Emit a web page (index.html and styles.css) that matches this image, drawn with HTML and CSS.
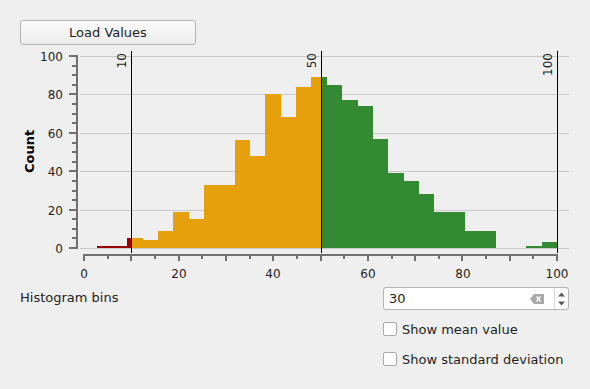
FILE: index.html
```html
<!DOCTYPE html>
<html>
<head>
<meta charset="utf-8">
<link rel="stylesheet" href="styles.css">
</head>
<body>
<div class="app">
  <div class="toolbar">
    <button class="btn">Load Values</button>
  </div>
  <svg class="chart" width="590" height="240" viewBox="0 44 590 240" xmlns="http://www.w3.org/2000/svg" shape-rendering="crispEdges">
    <!-- grid -->
    <g fill="#c9c9c9">
      <rect x="80" y="56" width="489" height="1"/>
      <rect x="80" y="94" width="489" height="1"/>
      <rect x="80" y="133" width="489" height="1"/>
      <rect x="80" y="171" width="489" height="1"/>
      <rect x="80" y="210" width="489" height="1"/>
      <rect x="80" y="248" width="489" height="1"/>
    </g>
    <!-- bars -->
    <g fill="#990000">
      <rect x="97" y="246" width="30" height="2"/>
      <rect x="127" y="238" width="4" height="10"/>
    </g>
    <g fill="#e6a00b">
      <rect x="131" y="238" width="12" height="10"/>
      <rect x="143" y="240" width="15" height="8"/>
      <rect x="158" y="231" width="15" height="17"/>
      <rect x="173" y="212" width="16" height="36"/>
      <rect x="189" y="219" width="15" height="29"/>
      <rect x="204" y="185" width="31" height="63"/>
      <rect x="235" y="140" width="15" height="108"/>
      <rect x="250" y="156" width="15" height="92"/>
      <rect x="265" y="94" width="16" height="154"/>
      <rect x="281" y="117" width="15" height="131"/>
      <rect x="296" y="87" width="15" height="161"/>
      <rect x="311" y="77" width="11" height="171"/>
    </g>
    <g fill="#338a33">
      <rect x="322" y="77" width="5" height="171"/>
      <rect x="327" y="85" width="15" height="163"/>
      <rect x="342" y="100" width="16" height="148"/>
      <rect x="358" y="106" width="15" height="142"/>
      <rect x="373" y="139" width="15" height="109"/>
      <rect x="388" y="173" width="16" height="75"/>
      <rect x="404" y="181" width="15" height="67"/>
      <rect x="419" y="194" width="15" height="54"/>
      <rect x="434" y="212" width="31" height="36"/>
      <rect x="465" y="231" width="31" height="17"/>
      <rect x="526" y="246" width="16" height="2"/>
      <rect x="542" y="242" width="15" height="6"/>
    </g>
    <!-- y axis -->
    <g fill="#707070">
      <rect x="76" y="55" width="2" height="194"/>
      <rect x="69" y="55" width="7" height="2"/>
      <rect x="69" y="93" width="7" height="2"/>
      <rect x="69" y="132" width="7" height="2"/>
      <rect x="69" y="170" width="7" height="2"/>
      <rect x="69" y="209" width="7" height="2"/>
      <rect x="69" y="247" width="7" height="2"/>
      <rect x="72" y="65" width="4" height="2"/>
      <rect x="72" y="74" width="4" height="2"/>
      <rect x="72" y="84" width="4" height="2"/>
      <rect x="72" y="103" width="4" height="2"/>
      <rect x="72" y="113" width="4" height="2"/>
      <rect x="72" y="122" width="4" height="2"/>
      <rect x="72" y="142" width="4" height="2"/>
      <rect x="72" y="151" width="4" height="2"/>
      <rect x="72" y="161" width="4" height="2"/>
      <rect x="72" y="180" width="4" height="2"/>
      <rect x="72" y="190" width="4" height="2"/>
      <rect x="72" y="199" width="4" height="2"/>
      <rect x="72" y="218" width="4" height="2"/>
      <rect x="72" y="228" width="4" height="2"/>
      <rect x="72" y="237" width="4" height="2"/>
    </g>
    <!-- x axis -->
    <g fill="#707070">
      <rect x="83" y="254" width="475" height="2"/>
      <rect x="83" y="256" width="2" height="5"/>
      <rect x="130" y="256" width="2" height="5"/>
      <rect x="178" y="256" width="2" height="5"/>
      <rect x="225" y="256" width="2" height="5"/>
      <rect x="272" y="256" width="2" height="5"/>
      <rect x="320" y="256" width="2" height="5"/>
      <rect x="367" y="256" width="2" height="5"/>
      <rect x="414" y="256" width="2" height="5"/>
      <rect x="461" y="256" width="2" height="5"/>
      <rect x="509" y="256" width="2" height="5"/>
      <rect x="556" y="256" width="2" height="5"/>
      <rect x="107" y="256" width="2" height="3"/>
      <rect x="154" y="256" width="2" height="3"/>
      <rect x="201" y="256" width="2" height="3"/>
      <rect x="249" y="256" width="2" height="3"/>
      <rect x="296" y="256" width="2" height="3"/>
      <rect x="343" y="256" width="2" height="3"/>
      <rect x="391" y="256" width="2" height="3"/>
      <rect x="438" y="256" width="2" height="3"/>
      <rect x="485" y="256" width="2" height="3"/>
      <rect x="532" y="256" width="2" height="3"/>
    </g>
    <!-- marker lines -->
    <g fill="#000">
      <rect x="131" y="51" width="1" height="202"/>
      <rect x="321" y="51" width="1" height="202"/>
      <rect x="557" y="51" width="1" height="202"/>
    </g>
    <g class="tick" text-anchor="end">
      <text x="63" y="61">100</text>
      <text x="63" y="99">80</text>
      <text x="63" y="138">60</text>
      <text x="63" y="176">40</text>
      <text x="63" y="215">20</text>
      <text x="63" y="253">0</text>
    </g>
    <g class="tick" text-anchor="middle">
      <text x="84" y="278">0</text>
      <text x="179" y="278">20</text>
      <text x="273" y="278">40</text>
      <text x="368" y="278">60</text>
      <text x="463" y="278">80</text>
      <text x="557" y="278">100</text>
    </g>
    <g class="tick" text-anchor="end">
      <text transform="translate(125.5,53) rotate(-90)">10</text>
      <text transform="translate(315.5,53) rotate(-90)">50</text>
      <text transform="translate(551.5,53) rotate(-90)">100</text>
    </g>
    <text class="axis-title" text-anchor="middle" transform="translate(33.5,151.5) rotate(-90)">Count</text>
  </svg>
  <div class="form">
    <div class="label">Histogram bins</div>
    <div class="controls">
      <div class="spin">
        <span class="spin-value">30</span>
        <svg class="clear" width="14" height="10" viewBox="0 0 14 10">
          <path d="M0 5 L4 0 H14 V10 H4 Z" fill="#a9a9a9"/>
          <path d="M6.5 2.5 L10.5 7.5 M10.5 2.5 L6.5 7.5" stroke="#fff" stroke-width="1.3"/>
        </svg>
        <div class="spin-btns">
          <svg width="13" height="20" viewBox="0 0 13 20">
            <path d="M3 7.5 L6.5 3.5 L10 7.5 Z" fill="#5a5a5a"/>
            <path d="M3 12.5 L6.5 16.5 L10 12.5 Z" fill="#5a5a5a"/>
          </svg>
        </div>
      </div>
      <label class="check"><span class="box"></span>Show mean value</label>
      <label class="check"><span class="box"></span>Show standard deviation</label>
    </div>
  </div>
</div>
</body>
</html>
```
FILE: styles.css
```css
html, body {
  margin: 0;
  padding: 0;
  background: #efefef;
}
body {
  font-family: "DejaVu Sans", sans-serif;
  font-size: 13px;
  color: #1e1e1e;
  width: 590px;
  height: 389px;
  overflow: hidden;
}
.toolbar {
  padding: 20px 0 0 20px;
  height: 24px;
}
.btn {
  display: block;
  width: 176px;
  height: 25px;
  margin: 0;
  padding: 0 0 1px 0;
  border: 1px solid #b2b2b2;
  border-radius: 3px;
  background: linear-gradient(#fbfbfb, #ececec);
  font-family: "DejaVu Sans", sans-serif;
  font-size: 13px;
  color: #1e1e1e;
}
.chart {
  display: block;
}
.tick {
  font-family: "DejaVu Sans", sans-serif;
  font-size: 12px;
  fill: #1e1e1e;
}
.axis-title {
  font-family: "DejaVu Sans", sans-serif;
  font-size: 13px;
  font-weight: bold;
  fill: #000;
}
.form {
  display: grid;
  grid-template-columns: 363px 186px;
  padding: 3px 0 0 20px;
}
.label {
  height: 22px;
  line-height: 22px;
}
.controls {
  display: flex;
  flex-direction: column;
}
.spin {
  box-sizing: border-box;
  height: 23px;
  border: 1px solid #b4b4b4;
  border-radius: 3px;
  background: #fff;
  display: flex;
  align-items: center;
  margin-bottom: 9px;
}
.spin-value {
  flex: 1;
  padding-left: 5px;
}
.clear {
  display: block;
  margin-right: 10px;
}
.spin-btns {
  border-left: 1px solid #d6d6d6;
  height: 100%;
  display: flex;
  align-items: center;
}
.spin-btns svg {
  display: block;
}
.check {
  display: flex;
  align-items: center;
  height: 20px;
  margin-bottom: 10px;
}
.box {
  box-sizing: border-box;
  width: 14px;
  height: 14px;
  border: 1px solid #aaaaaa;
  border-radius: 2px;
  background: #fff;
  margin-right: 5px;
}
```
